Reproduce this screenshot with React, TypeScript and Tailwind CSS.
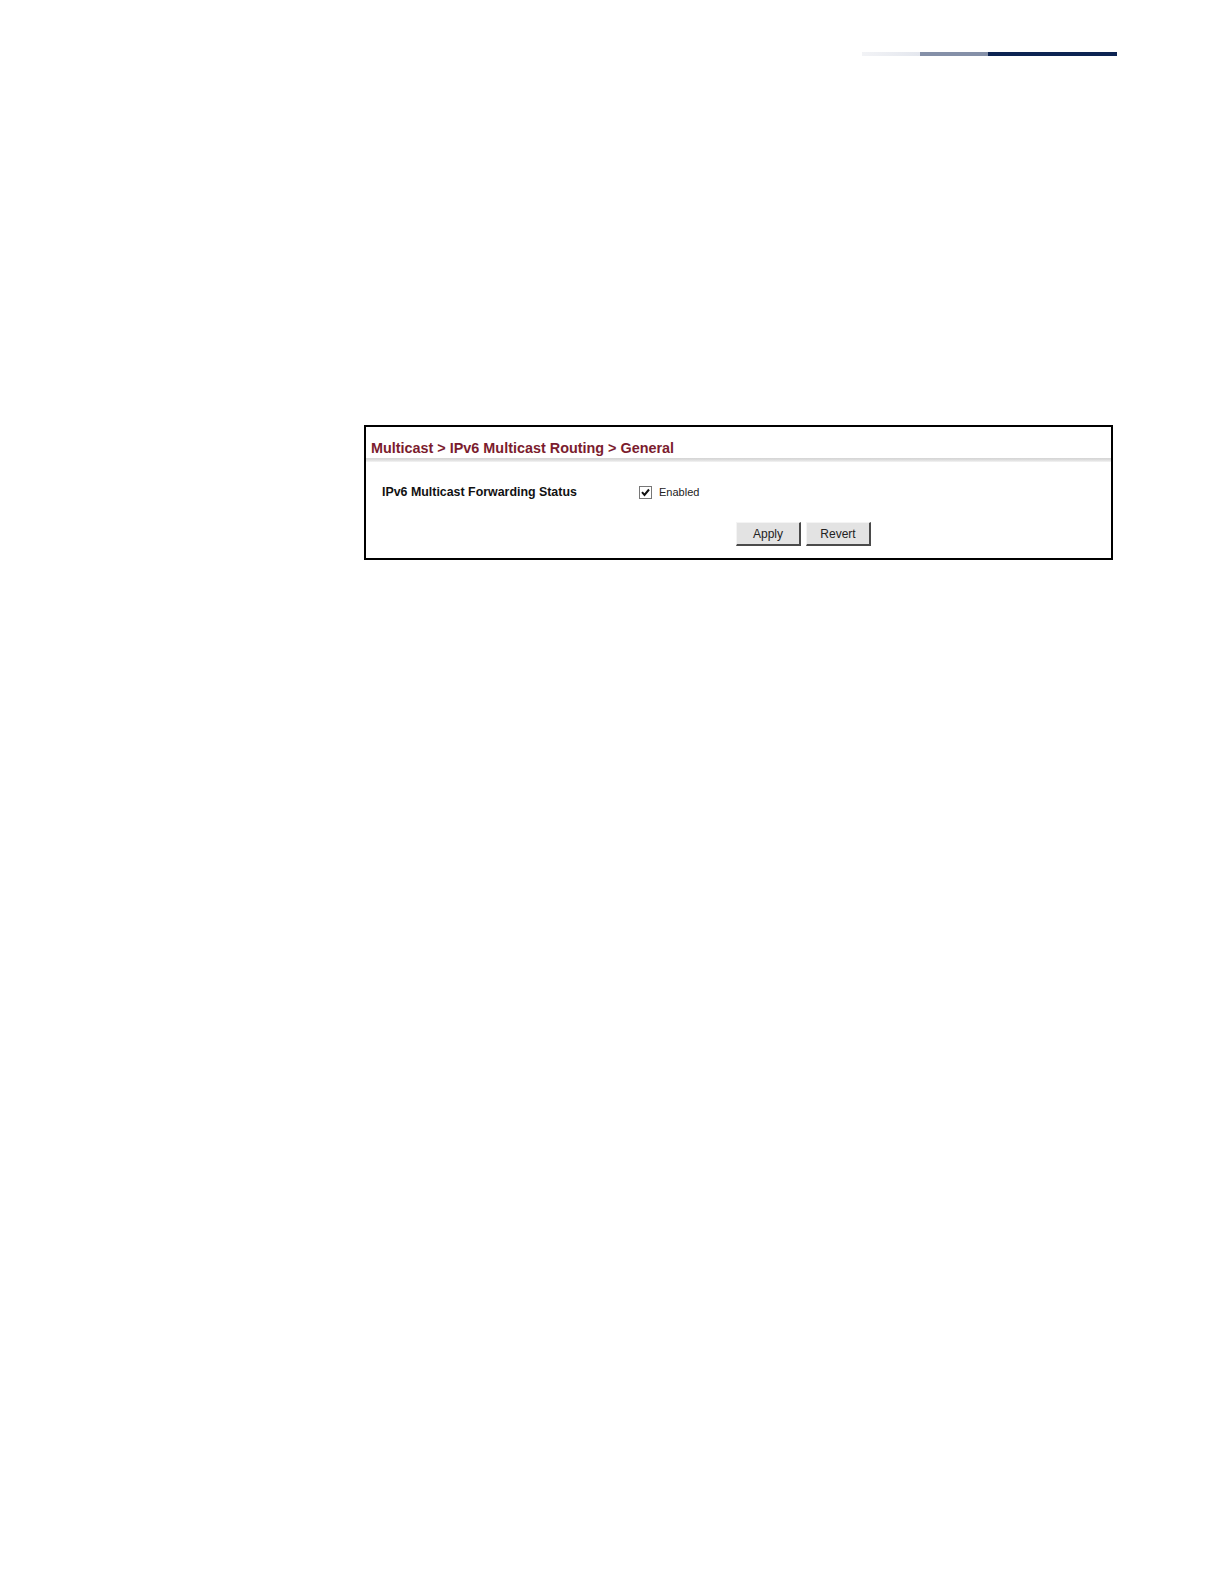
import React from "react";

export default function App() {
  return (
    <div className="w-[1224px] h-[1584px] bg-white font-['Liberation_Sans',Arial,sans-serif] overflow-hidden">
      <div className="pt-[52px] flex justify-end pr-[107px]">
        <div className="flex h-[4px]">
          <div className="w-[58px] bg-gradient-to-r from-[#f2f3f6] to-[#e4e7ee]" />
          <div className="w-[68px] bg-[#8590a8]" />
          <div className="w-[129px] bg-[#0d2452]" />
        </div>
      </div>

      <div className="mt-[369px] ml-[364px] w-[749px] h-[135px] border-2 border-black flex flex-col">
        <div className="pt-[13px] pl-[5px] h-[29px] text-[14.4px] leading-[16px] font-bold text-[#7b1c2e] whitespace-nowrap">
          Multicast &gt; IPv6 Multicast Routing &gt; General
        </div>
        <div className="mt-[2px] h-[4px] bg-gradient-to-b from-[#d4d4d4] via-[#dedede] to-[#f4f4f4]" />
        <div className="mt-[23px] flex items-center h-[14px]">
          <div className="ml-[16px] w-[257px] text-[12.4px] leading-[14px] font-bold text-[#111] whitespace-nowrap">
            IPv6 Multicast Forwarding Status
          </div>
          <div className="w-[13px] h-[13px] border border-[#777] bg-white flex items-center justify-center">
            <svg width="9" height="9" viewBox="0 0 9 9">
              <path d="M1 4.2 L3.5 7 L8 1.5" fill="none" stroke="#111" strokeWidth="2" />
            </svg>
          </div>
          <div className="ml-[7px] text-[11px] leading-[14px] text-[#222]">Enabled</div>
        </div>
        <div className="mt-[23px] flex gap-[5px] ml-[370px]">
          <button className="w-[65px] h-[24px] bg-[#e3e3e3] border border-t-[#f4f4f4] border-l-[#f4f4f4] border-r-2 border-b-2 border-r-[#4a4a4a] border-b-[#4a4a4a] text-[12px] text-[#222] leading-[20px]">
            Apply
          </button>
          <button className="w-[65px] h-[24px] bg-[#e3e3e3] border border-t-[#f4f4f4] border-l-[#f4f4f4] border-r-2 border-b-2 border-r-[#4a4a4a] border-b-[#4a4a4a] text-[12px] text-[#222] leading-[20px]">
            Revert
          </button>
        </div>
      </div>
    </div>
  );
}
